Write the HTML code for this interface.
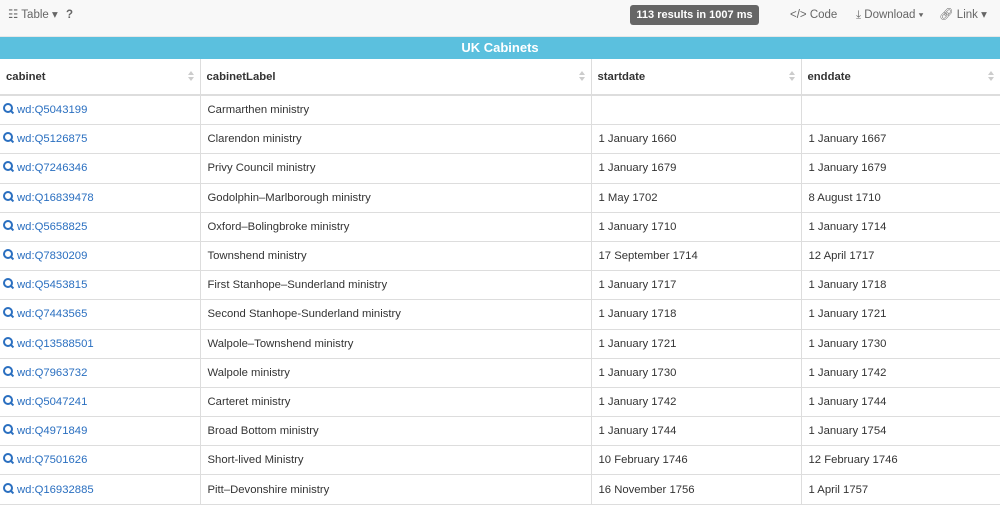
<!DOCTYPE html><html><head><style>
body{margin:0;width:1000px;height:505px;overflow:hidden;font-family:"Liberation Sans",sans-serif;background:#fff;color:#333}
.tb{height:36px;background:#f8f8f8;border-bottom:1px solid #e7e7e7;position:relative;font-size:11.5px;color:#666}
.tb span{position:absolute;top:8px;line-height:14px}
.badge{position:absolute;left:630px;top:5px;width:129px;height:20px;background:#666;color:#fff;border-radius:3px;font-weight:bold;font-size:11px;line-height:20px;text-align:center}
.bar{height:22px;background:#5bc0de;color:#fff;font-weight:bold;font-size:13px;text-align:center;line-height:22px}
table{border-collapse:collapse;width:1000px;table-layout:fixed;font-size:11.3px}
th{height:35px;text-align:left;padding:0 6px;border-right:1px solid #ddd;border-bottom:2px solid #ddd;font-size:11.3px;position:relative}
.s{position:absolute;right:6px;top:12px;width:0;height:0;border-left:3px solid transparent;border-right:3px solid transparent;border-bottom:4px solid #ccc}
.s:after{content:"";position:absolute;left:-3px;top:6px;border-left:3px solid transparent;border-right:3px solid transparent;border-top:4px solid #ccc}
td{height:28.2px;padding:0 7px;border-right:1px solid #ddd;border-bottom:1px solid #ddd;white-space:nowrap;vertical-align:middle;line-height:14px}
td:first-child{padding-left:3px}
a{color:#2a6fc0;text-decoration:none}
.q{display:inline-block;width:6px;height:6px;border:2px solid #2a6fc0;border-radius:50%;position:relative;margin-right:4px;vertical-align:middle;top:-2px}
.q:after{content:"";position:absolute;width:2px;height:4px;background:#2a6fc0;left:6px;top:5px;transform:rotate(-45deg)}
</style></head><body>
<div class="tb"><span style="left:8px">☷ Table ▾</span><span style="left:66px;font-weight:bold">?</span>
<div class="badge">113 results in 1007 ms</div>
<span style="left:790px">&lt;/&gt; Code</span><span style="left:856px">⤓ Download ▾</span><span style="left:939px">🔗︎ Link ▾</span></div>
<div class="bar">UK Cabinets</div>
<table><colgroup><col style="width:200px"><col style="width:391px"><col style="width:210px"><col style="width:199px"></colgroup>
<tr><th>cabinet<i class="s"></i></th><th>cabinetLabel<i class="s"></i></th><th>startdate<i class="s"></i></th><th>enddate<i class="s"></i></th></tr>
<tr><td><a><i class="q"></i>wd:Q5043199</a></td><td>Carmarthen ministry</td><td></td><td></td></tr>
<tr><td><a><i class="q"></i>wd:Q5126875</a></td><td>Clarendon ministry</td><td>1 January 1660</td><td>1 January 1667</td></tr>
<tr><td><a><i class="q"></i>wd:Q7246346</a></td><td>Privy Council ministry</td><td>1 January 1679</td><td>1 January 1679</td></tr>
<tr><td><a><i class="q"></i>wd:Q16839478</a></td><td>Godolphin–Marlborough ministry</td><td>1 May 1702</td><td>8 August 1710</td></tr>
<tr><td><a><i class="q"></i>wd:Q5658825</a></td><td>Oxford–Bolingbroke ministry</td><td>1 January 1710</td><td>1 January 1714</td></tr>
<tr><td><a><i class="q"></i>wd:Q7830209</a></td><td>Townshend ministry</td><td>17 September 1714</td><td>12 April 1717</td></tr>
<tr><td><a><i class="q"></i>wd:Q5453815</a></td><td>First Stanhope–Sunderland ministry</td><td>1 January 1717</td><td>1 January 1718</td></tr>
<tr><td><a><i class="q"></i>wd:Q7443565</a></td><td>Second Stanhope-Sunderland ministry</td><td>1 January 1718</td><td>1 January 1721</td></tr>
<tr><td><a><i class="q"></i>wd:Q13588501</a></td><td>Walpole–Townshend ministry</td><td>1 January 1721</td><td>1 January 1730</td></tr>
<tr><td><a><i class="q"></i>wd:Q7963732</a></td><td>Walpole ministry</td><td>1 January 1730</td><td>1 January 1742</td></tr>
<tr><td><a><i class="q"></i>wd:Q5047241</a></td><td>Carteret ministry</td><td>1 January 1742</td><td>1 January 1744</td></tr>
<tr><td><a><i class="q"></i>wd:Q4971849</a></td><td>Broad Bottom ministry</td><td>1 January 1744</td><td>1 January 1754</td></tr>
<tr><td><a><i class="q"></i>wd:Q7501626</a></td><td>Short-lived Ministry</td><td>10 February 1746</td><td>12 February 1746</td></tr>
<tr><td><a><i class="q"></i>wd:Q16932885</a></td><td>Pitt–Devonshire ministry</td><td>16 November 1756</td><td>1 April 1757</td></tr>
</table></body></html>
